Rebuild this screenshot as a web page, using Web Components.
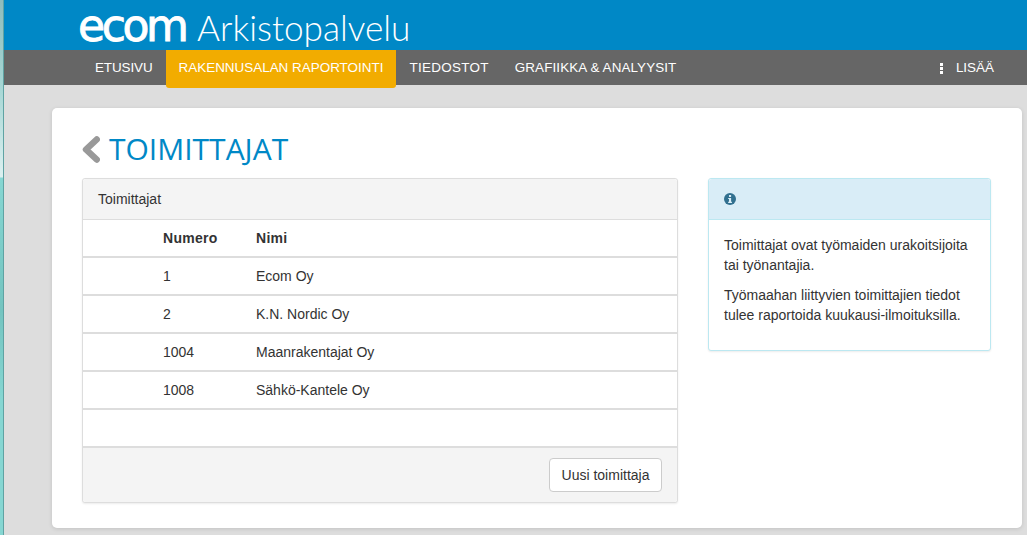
<!DOCTYPE html>
<html lang="fi">
<head>
<meta charset="utf-8">
<title>Toimittajat</title>
<style>
  html, body { margin: 0; height: 535px; overflow: hidden; }
  body { font: 14px/20px "Liberation Sans", Arial, sans-serif; color: #333; background: #ddd; }
</style>
</head>
<body>
<app-shell>
  <site-header slot="header" title-text="Arkistopalvelu"></site-header>
  <site-nav slot="nav">
    <nav-link style="letter-spacing: -.1px">Etusivu</nav-link>
    <nav-link active>Rakennusalan raportointi</nav-link>
    <nav-link style="letter-spacing: .3px">Tiedostot</nav-link>
    <nav-link style="letter-spacing: .1px">Grafiikka &amp; analyysit</nav-link>
    <nav-link slot="right" dots>Lisää</nav-link>
  </site-nav>
  <page-card>
    <back-title slot="title">Toimittajat</back-title>
    <data-panel heading="Toimittajat">
      <table-row head><span>Numero</span><span>Nimi</span></table-row>
      <table-row><span>1</span><span>Ecom Oy</span></table-row>
      <table-row><span>2</span><span>K.N. Nordic Oy</span></table-row>
      <table-row><span>1004</span><span>Maanrakentajat Oy</span></table-row>
      <table-row><span>1008</span><span>Sähkö-Kantele Oy</span></table-row>
      <table-row></table-row>
      <rk-button slot="footer">Uusi toimittaja</rk-button>
    </data-panel>
    <info-panel slot="side">
      <p>Toimittajat ovat työmaiden urakoitsijoita tai työnantajia.</p>
      <p>Työmaahan liittyvien toimittajien tiedot tulee raportoida kuukausi-ilmoituksilla.</p>
    </info-panel>
  </page-card>
</app-shell>

<script>
class AppShell extends HTMLElement{
  constructor(){
    super();
    this.attachShadow({mode: 'open'});
    this.shadowRoot.innerHTML = `
      <style>
      :host{display: flex; height: 535px;}
      #strip{
        flex: 0 0 3px;
        background: linear-gradient(#8fbcbc 0, #a5d6d4 85px, #dcf0f0 177px, #86d6d2 178px, #74c4c0 310px, #86d6d2 400px);
        border-right: 1px solid #5fa3a3;
      }
      #main{flex: 1; min-width: 0;}
      #content{padding: 23px 5px 0 48px;}
      </style>
      <div id="strip"></div>
      <div id="main">
        <slot name="header"></slot>
        <slot name="nav"></slot>
        <div id="content"><slot></slot></div>
      </div>
    `;
  }
}

class SiteHeader extends HTMLElement{
  constructor(){
    super();
    this.attachShadow({mode: 'open'});
    this.shadowRoot.innerHTML = `
      <style>
      :host{display: flex; align-items: baseline; height: 50px; box-sizing: border-box; padding: 6px 0 0 74px; background: #0088c6; color: #fff;}
      #logo{
        flex: 0 0 119px;
        font: 44px/40px "DejaVu Sans", sans-serif;
        letter-spacing: -3.4px;
        -webkit-text-stroke: .9px #fff;
      }
      #name{font: 300 35.2px/40px Lato, sans-serif;}
      </style>
      <span id="logo">ecom</span>
      <span id="name"></span>
    `;
  }
  connectedCallback(){
    this.shadowRoot.querySelector('#name').textContent = this.getAttribute('title-text');
  }
}

class SiteNav extends HTMLElement{
  constructor(){
    super();
    this.attachShadow({mode: 'open'});
    this.shadowRoot.innerHTML = `
      <style>
      :host{display: flex; justify-content: space-between; height: 35px; padding: 0 20px 0 78px; background: #666;}
      div{display: flex;}
      </style>
      <div><slot></slot></div>
      <div><slot name="right"></slot></div>
    `;
  }
}

class NavLink extends HTMLElement{
  constructor(){
    super();
    this.attachShadow({mode: 'open'});
    this.shadowRoot.innerHTML = `
      <style>
      :host{display: flex; align-items: center; gap: 13px; height: 35px; box-sizing: border-box; padding: 1px 13px 0; color: #fff; font-size: 13.45px; text-transform: uppercase;}
      :host([active]){height: 38px; padding-bottom: 3px; background: #f2ac00; border-radius: 0 0 3px 3px; position: relative;}
      svg{display: none;}
      :host([dots]) svg{display: block;}
      </style>
      <svg width="3" height="11" viewBox="0 0 3 11" fill="#fff"><rect width="3" height="3"/><rect y="4" width="3" height="3"/><rect y="8" width="3" height="3"/></svg>
      <slot></slot>
    `;
  }
}

class PageCard extends HTMLElement{
  constructor(){
    super();
    this.attachShadow({mode: 'open'});
    this.shadowRoot.innerHTML = `
      <style>
      :host{
        display: block;
        height: 420px;
        box-sizing: border-box;
        padding: 21px 31px 0 30px;
        background: #fff;
        border-radius: 5px;
        box-shadow: 0 1px 4px rgb(0 0 0 / 12%);
      }
      #cols{display: grid; grid-template-columns: 596px 283px; gap: 30px;}
      </style>
      <slot name="title"></slot>
      <div id="cols">
        <div><slot></slot></div>
        <div><slot name="side"></slot></div>
      </div>
    `;
  }
}

class BackTitle extends HTMLElement{
  constructor(){
    super();
    this.attachShadow({mode: 'open'});
    this.shadowRoot.innerHTML = `
      <style>
      :host{display: flex; align-items: center; gap: 9px; height: 40px; margin-bottom: 9px; color: #0088c6; font: 30px/40px "Open Sans", sans-serif; text-transform: uppercase;}
      svg{flex: none;}
      </style>
      <svg width="18" height="27" viewBox="0 0 18 27"><polyline points="14.7,3.5 4,13.5 14.7,23.5" fill="none" stroke="#999" stroke-width="6.5" stroke-linecap="round" stroke-linejoin="round"/></svg>
      <slot></slot>
    `;
  }
}

class DataPanel extends HTMLElement{
  constructor(){
    super();
    this.attachShadow({mode: 'open'});
    this.shadowRoot.innerHTML = `
      <style>
      :host{display: block; border: 1px solid #ddd; border-radius: 3px; box-shadow: 0 1px 2px rgb(0 0 0 / 8%); background: #fff;}
      header{height: 40px; padding: 0 15px; line-height: 40px; background: #f4f4f4; border-bottom: 1px solid #ddd; border-radius: 3px 3px 0 0;}
      footer{display: flex; justify-content: flex-end; padding: 10px 15px; background: #f4f4f4; border-radius: 0 0 3px 3px;}
      </style>
      <header></header>
      <div><slot></slot></div>
      <footer><slot name="footer"></slot></footer>
    `;
  }
  connectedCallback(){
    this.shadowRoot.querySelector('header').textContent = this.getAttribute('heading');
  }
}

class TableRow extends HTMLElement{
  constructor(){
    super();
    this.attachShadow({mode: 'open'});
    this.shadowRoot.innerHTML = `
      <style>
      :host{display: grid; grid-template-columns: 93px 1fr; align-items: center; height: 36px; padding-left: 80px; border-bottom: 2px solid #ddd;}
      :host([head]){font-weight: bold; letter-spacing: .3px;}
      </style>
      <slot></slot>
    `;
  }
}

class RkButton extends HTMLElement{
  constructor(){
    super();
    this.attachShadow({mode: 'open'});
    this.shadowRoot.innerHTML = `
      <style>
      :host{display: block;}
      button{width: 113px; height: 34px; padding: 6px 0; font: inherit; color: #333; background: #fff; border: 1px solid #ccc; border-radius: 4px;}
      </style>
      <button><slot></slot></button>
    `;
  }
}

class InfoPanel extends HTMLElement{
  constructor(){
    super();
    this.attachShadow({mode: 'open'});
    this.shadowRoot.innerHTML = `
      <style>
      :host{display: block; height: 173px; box-sizing: border-box; border: 1px solid #bce8f1; border-radius: 3px; box-shadow: 0 1px 2px rgb(0 0 0 / 8%); background: #fff;}
      header{display: flex; align-items: center; height: 40px; padding: 0 15px; background: #d9edf7; border-bottom: 1px solid #bce8f1; border-radius: 3px 3px 0 0;}
      #body{padding: 15px;}
      ::slotted(p){margin: 0 0 10px;}
      </style>
      <header>
        <svg width="12" height="12" viewBox="0 0 13 13">
          <circle cx="6.5" cy="6.5" r="6.5" fill="#31708f"/>
          <rect x="5.4" y="2.2" width="2.3" height="2.1" fill="#d9edf7"/>
          <path d="M4.5 5.3H7.7V9.5H8.6V10.8H4.5V9.5H5.4V6.6H4.5Z" fill="#d9edf7"/>
        </svg>
      </header>
      <div id="body"><slot></slot></div>
    `;
  }
}

customElements.define('app-shell', AppShell);
customElements.define('site-header', SiteHeader);
customElements.define('site-nav', SiteNav);
customElements.define('nav-link', NavLink);
customElements.define('page-card', PageCard);
customElements.define('back-title', BackTitle);
customElements.define('data-panel', DataPanel);
customElements.define('table-row', TableRow);
customElements.define('rk-button', RkButton);
customElements.define('info-panel', InfoPanel);
</script>
</body>
</html>
